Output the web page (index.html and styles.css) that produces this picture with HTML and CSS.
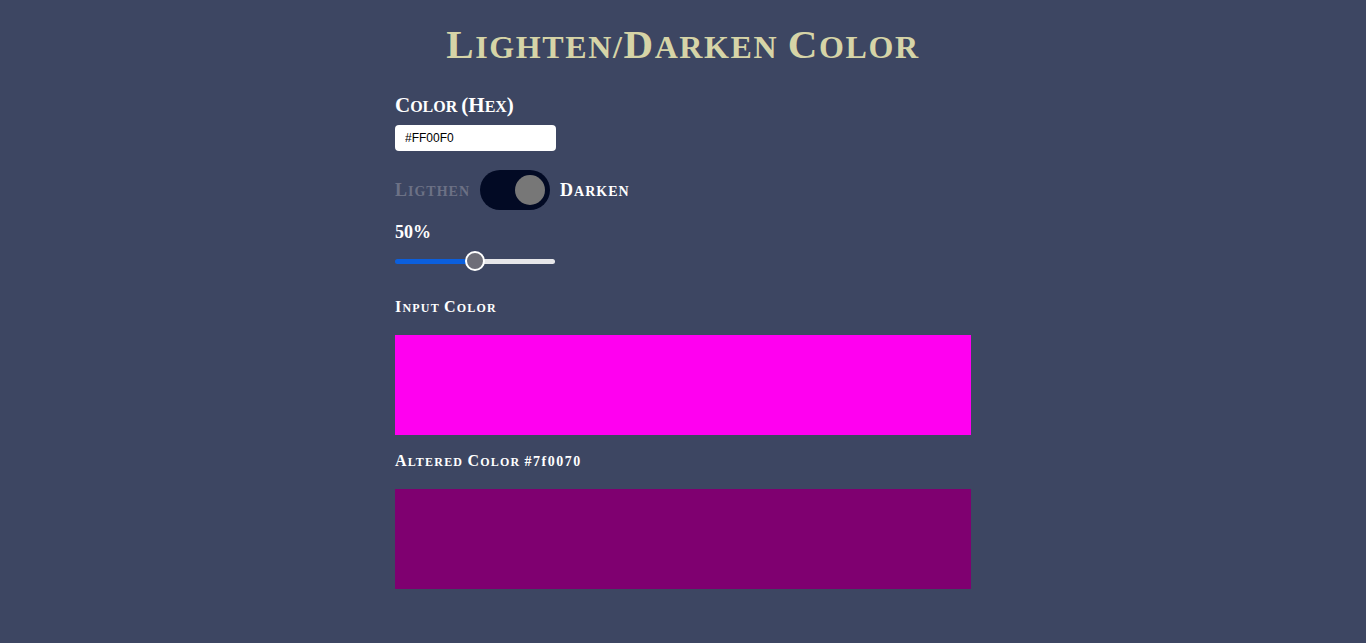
FILE: index.html
```html
<!DOCTYPE html>
<html>
<head>
<meta charset="utf-8">
<link rel="stylesheet" href="styles.css">
</head>
<body>
<main class="app">
  <h1 class="title sc"><span class="ini">L</span>ighten/<span class="ini">D</span>arken <span class="ini">C</span>olor</h1>
  <label class="label sc" for="hex"><span class="ini">C</span>olor <span class="ini">(H</span>ex<span class="ini">)</span></label>
  <input id="hex" class="hex-input" type="text" value="#FF00F0">
  <div class="toggle-row">
    <span class="mode mode-off sc"><span class="ini">L</span>igthen</span>
    <span class="switch"><span class="knob"></span></span>
    <span class="mode mode-on sc"><span class="ini">D</span>arken</span>
  </div>
  <div class="percent">50%</div>
  <input class="slider" type="range" min="0" max="100" value="50">
  <h3 class="swatch-label sc"><span class="ini">I</span>nput <span class="ini">C</span>olor</h3>
  <div class="swatch swatch-input"></div>
  <h3 class="swatch-label sc"><span class="ini">A</span>ltered <span class="ini">C</span>olor <span class="code">#7f0070</span></h3>
  <div class="swatch swatch-altered"></div>
</main>
</body>
</html>
```
FILE: styles.css
```css
html, body {
  margin: 0;
  padding: 0;
  background: #3d4662;
}
body {
  font-family: "Liberation Serif", "DejaVu Serif", serif;
  color: #ffffff;
}
.sc {
  text-transform: uppercase;
}
.app {
  width: 576px;
  margin: 0 auto;
  display: flex;
  flex-direction: column;
  align-items: flex-start;
  padding-top: 20px;
}
.title {
  align-self: center;
  margin: 0;
  font-size: 32px;
  font-weight: bold;
  color: #d6d4a7;
  letter-spacing: 1.6px;
  line-height: 48px;
}
.title .ini {
  font-size: 41px;
}
.label {
  margin-top: 21px;
  font-size: 16px;
  font-weight: bold;
  line-height: 26px;
  letter-spacing: 0;
}
.label .ini {
  font-size: 21px;
}
.hex-input {
  margin-top: 5px;
  width: 161px;
  height: 26px;
  box-sizing: border-box;
  border: none;
  border-radius: 4px;
  padding: 0 10px;
  font-family: "Liberation Sans", Arial, sans-serif;
  font-size: 12px;
  color: #000;
  background: #fff;
}
.toggle-row {
  margin-top: 19px;
  display: flex;
  align-items: center;
  gap: 10px;
}
.mode {
  font-size: 14px;
  font-weight: bold;
  letter-spacing: 1px;
}
.mode .ini {
  font-size: 18px;
}
.mode-off {
  color: #6c7185;
}
.mode-on {
  color: #ffffff;
}
.switch {
  width: 70px;
  height: 40px;
  border-radius: 20px;
  background: #020a24;
  display: flex;
  align-items: center;
  justify-content: flex-end;
  padding-right: 5px;
  box-sizing: border-box;
}
.knob {
  width: 30px;
  height: 30px;
  border-radius: 50%;
  background: #777777;
}
.percent {
  margin-top: 10px;
  font-size: 18px;
  font-weight: bold;
  line-height: 24px;
}
.slider {
  -webkit-appearance: none;
  appearance: none;
  margin: 6px 0 0 0;
  width: 160px;
  height: 22px;
  background: transparent;
}
.slider::-webkit-slider-runnable-track {
  height: 5px;
  border-radius: 3px;
  background: linear-gradient(to right, #0b5fdd 0%, #0b5fdd 50%, #e6e6e9 50%, #e6e6e9 100%);
}
.slider::-webkit-slider-thumb {
  -webkit-appearance: none;
  width: 20px;
  height: 20px;
  margin-top: -7.5px;
  border-radius: 50%;
  background: #6e6e78;
  border: 2px solid #ffffff;
  box-sizing: border-box;
}
.swatch-label {
  margin: 25px 0 0 0;
  font-size: 12px;
  font-weight: bold;
  line-height: 20px;
  letter-spacing: 1.2px;
}
.swatch-label .ini {
  font-size: 16px;
}
.swatch-label .code {
  text-transform: none;
  font-size: 14px;
  letter-spacing: 1.5px;
}
.swatch {
  width: 576px;
  height: 100px;
  margin-top: 17px;
}
.swatch-input {
  background: #ff00f0;
}
.swatch-altered {
  background: #7f0070;
}
.swatch-input + .swatch-label {
  margin-top: 16px;
}
```
